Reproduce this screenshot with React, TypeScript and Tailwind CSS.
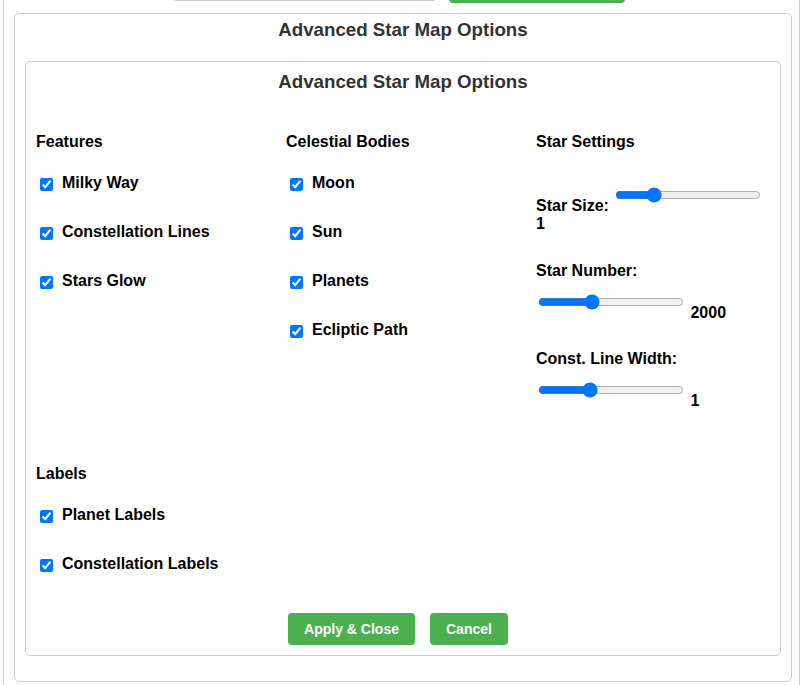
import React from "react";

const features = ["Milky Way", "Constellation Lines", "Stars Glow"];
const bodies = ["Moon", "Sun", "Planets", "Ecliptic Path"];
const labels = ["Planet Labels", "Constellation Labels"];

const CheckRow = ({ label }: { label: string }) => (
  <label className="flex items-center h-[19px] mb-[30px] text-[16px] font-bold text-black">
    <input
      type="checkbox"
      defaultChecked
      className="ml-[4px] mr-[3px] mt-[4px] w-[13px] h-[13px]"
    />
    <span className="ml-[6px]">{label}</span>
  </label>
);

const SectionTitle = ({ children }: { children: React.ReactNode }) => (
  <h4 className="mt-[21px] mb-[22px] text-[16px] font-bold text-black">{children}</h4>
);

const Slider = ({
  label,
  value,
  pos,
}: {
  label: string;
  value: string;
  pos: number;
}) => (
  <div className="mb-[28.5px] text-[16px] font-bold text-black">
    {label}{" "}
    <input
      type="range"
      min={0}
      max={1000}
      defaultValue={pos}
      className="inline-block align-baseline w-[146px] h-[32px] mx-[2px] mt-[6px] mb-0"
    />{" "}
    <span>{value}</span>
  </div>
);

export default function App() {
  return (
    <div className="h-[685px] overflow-hidden bg-white font-['Liberation_Sans',Arial,sans-serif] leading-[normal]">
      <div className="mx-[3px] h-full flex flex-col border-x border-[#ccc]">
        {/* top controls, mostly scrolled out of view */}
        <div className="flex items-start gap-[12px] -mt-[40px] ml-[168px]">
          <div className="w-[265px] h-[41px] border border-[#ccc] rounded-[4px] bg-white" />
          <div className="w-[176px] h-[43px] rounded-[4px] bg-[#4CAF50]" />
        </div>

        <div className="mt-[10px] ml-[10px] w-[778px] h-[669px] shrink-0 border border-[#ccc] rounded-[5px] px-[10px] pt-[5px]">
          <h3 className="text-center text-[18.72px] font-bold text-[#333] mb-[20px]">
            Advanced Star Map Options
          </h3>

          <div className="border border-[#ccc] rounded-[5px] px-[10px] pt-[9px] pb-[10px]">
            <h3 className="text-center text-[18.72px] font-bold text-[#333] mb-[19px]">
              Advanced Star Map Options
            </h3>

            <div className="grid grid-cols-3 gap-x-[16px] gap-y-[5.5px]">
              <div>
                <SectionTitle>Features</SectionTitle>
                {features.map((f) => (
                  <CheckRow key={f} label={f} />
                ))}
              </div>
              <div>
                <SectionTitle>Celestial Bodies</SectionTitle>
                {bodies.map((b) => (
                  <CheckRow key={b} label={b} />
                ))}
              </div>
              <div>
                <SectionTitle>Star Settings</SectionTitle>
                <Slider label="Star Size:" value="1" pos={238} />
                <Slider label="Star Number:" value="2000" pos={354} />
                <Slider label="Const. Line Width:" value="1" pos={338} />
              </div>
              <div>
                <SectionTitle>Labels</SectionTitle>
                {labels.map((l) => (
                  <CheckRow key={l} label={l} />
                ))}
              </div>
            </div>

            <div className="flex justify-center mt-[9.5px]">
              <button className="mr-[15px] px-[16px] py-[8px] rounded-[4px] bg-[#4CAF50] text-white text-[14px] font-bold">
                Apply &amp; Close
              </button>
              <button className="mr-[10px] px-[16px] py-[8px] rounded-[4px] bg-[#4CAF50] text-white text-[14px] font-bold">
                Cancel
              </button>
            </div>
          </div>
        </div>
      </div>
    </div>
  );
}
